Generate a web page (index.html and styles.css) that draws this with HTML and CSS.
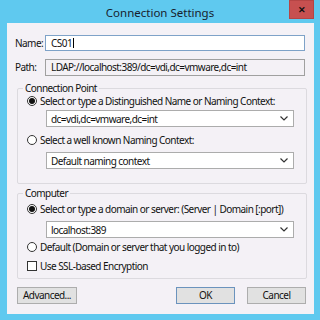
FILE: index.html
```html
<!DOCTYPE html>
<html lang="en">
<head>
    <meta charset="UTF-8">
    <title>Connection Settings</title>
    <link rel="stylesheet" href="styles.css">
</head>
<body>
    <div class="window">
        <div class="titlebar">
            <span></span>
            <div class="title">Connection Settings</div>
            <div class="close">&#x2715;</div>
        </div>
        <div class="client">
            <div class="field-row">
                <span class="label">Name:</span>
                <div class="textbox focused">CS01<span class="caret"></span></div>
            </div>
            <div class="field-row path">
                <span class="label">Path:</span>
                <div class="textbox readonly">LDAP://localhost:389/dc=vdi,dc=vmware,dc=int</div>
            </div>

            <div class="group group-point">
                <div class="group-title">Connection Point</div>
                <label class="option first">
                    <span class="radio checked"></span>
                    Select or type a Distinguished Name or Naming Context:
                </label>
                <div class="combo">
                    <span>dc=vdi,dc=vmware,dc=int</span>
                    <svg width="8" height="5" viewBox="0 0 8 5"><polyline points="0.5,0.5 4,4 7.5,0.5" fill="none" stroke="#333" stroke-width="1.2"/></svg>
                </div>
                <label class="option second">
                    <span class="radio"></span>
                    Select a well known Naming Context:
                </label>
                <div class="combo">
                    <span>Default naming context</span>
                    <svg width="8" height="5" viewBox="0 0 8 5"><polyline points="0.5,0.5 4,4 7.5,0.5" fill="none" stroke="#333" stroke-width="1.2"/></svg>
                </div>
            </div>

            <div class="group group-computer">
                <div class="group-title">Computer</div>
                <label class="option first">
                    <span class="radio checked"></span>
                    Select or type a domain or server: (Server | Domain [:port])
                </label>
                <div class="combo">
                    <span>localhost:389</span>
                    <svg width="8" height="5" viewBox="0 0 8 5"><polyline points="0.5,0.5 4,4 7.5,0.5" fill="none" stroke="#333" stroke-width="1.2"/></svg>
                </div>
                <label class="option default">
                    <span class="radio"></span>
                    Default (Domain or server that you logged in to)
                </label>
                <label class="option ssl">
                    <span class="checkbox"></span>
                    Use SSL-based Encryption
                </label>
            </div>

            <div class="buttons">
                <button>Advanced...</button>
                <span class="spacer"></span>
                <button class="default-btn">OK</button>
                <button>Cancel</button>
            </div>
        </div>
    </div>
</body>
</html>
```

FILE: styles.css
```css
body {
    margin: 0;
    background-color: #5fc9ef;
    font-family: "Noto Sans", sans-serif;
    font-size: 10px;
    letter-spacing: -0.55px;
    color: #111;
}

.window {
    width: 320px;
    height: 320px;
    display: flex;
    flex-direction: column;
}

.titlebar {
    height: 23px;
    display: grid;
    grid-template-columns: 1fr auto 1fr;
    align-items: start;
}

.title {
    font-size: 11.5px;
    letter-spacing: 0;
    color: #17212d;
    line-height: 16px;
    margin-top: 5px;
}

.close {
    justify-self: end;
    width: 25px;
    height: 19px;
    margin-right: 6px;
    background-color: #c75050;
    color: #111;
    font-size: 9px;
    font-weight: bold;
    letter-spacing: 0;
    line-height: 19px;
    text-align: center;
    box-shadow: inset 0 0 0 1px #b54545;
}

.client {
    margin: 0 6px 6px 7px;
    height: 291px;
    background-color: #f4f1f6;
    padding-top: 12px;
    box-sizing: border-box;
    display: flex;
    flex-direction: column;
}

.field-row {
    display: flex;
    align-items: center;
    height: 16px;
    padding-left: 8px;
}

.field-row.path {
    margin-top: 8px;
}

.label {
    width: 30px;
    flex-shrink: 0;
}

.textbox {
    width: 260px;
    height: 16px;
    box-sizing: border-box;
    border: 1px solid #a6a6a6;
    padding-left: 5px;
    line-height: 14px;
    display: flex;
    align-items: center;
    white-space: nowrap;
}

.textbox.focused {
    background-color: #fff;
    border-color: #7ea2c8;
}

.textbox.readonly {
    height: 17px;
    background-color: #f4f1f6;
    border-color: #a0a0a0;
}

.caret {
    display: inline-block;
    width: 1px;
    height: 10px;
    background-color: #000;
    margin-left: 1px;
}

.group {
    margin: 13px 7px 0 10px;
    border: 1px solid #dcdadf;
    border-radius: 2px;
    display: flex;
    flex-direction: column;
    padding-left: 9px;
}

.group-point {
    height: 96px;
    box-sizing: border-box;
}

.group-computer {
    margin-top: 9px;
    height: 86px;
    box-sizing: border-box;
}

.group-title {
    align-self: flex-start;
    margin: -8px 0 0 -4px;
    padding: 0 2px;
    height: 14px;
    line-height: 14px;
    background-color: #f4f1f6;
}

.option {
    display: flex;
    align-items: center;
    gap: 3px;
    height: 14px;
    white-space: nowrap;
}

.group .first {
    margin-top: -1px;
}

.group-computer .first {
    margin-top: 2px;
}

.option.second {
    margin-top: 6px;
}

.option.default {
    margin-top: 2px;
}

.option.ssl {
    margin-top: 5px;
}

.radio {
    flex-shrink: 0;
    width: 10px;
    height: 10px;
    box-sizing: border-box;
    border: 1px solid #333;
    border-radius: 50%;
    background-color: #fff;
    display: flex;
    align-items: center;
    justify-content: center;
}

.radio.checked::after {
    content: "";
    width: 6px;
    height: 6px;
    border-radius: 50%;
    background-color: #111;
}

.checkbox {
    flex-shrink: 0;
    width: 10px;
    height: 10px;
    box-sizing: border-box;
    border: 1px solid #333;
    background-color: #fff;
}

.combo {
    margin: 2px 0 0 19px;
    width: 248px;
    height: 17px;
    box-sizing: border-box;
    border: 1px solid #acacac;
    background-color: #fff;
    display: flex;
    align-items: center;
    justify-content: space-between;
    padding: 0 5px 0 4px;
    white-space: nowrap;
}

.option.second + .combo {
    margin-top: 5px;
}

.group-computer .combo {
    margin-top: 5px;
}

.buttons {
    display: flex;
    gap: 12px;
    margin: 8px 8px 0 10px;
}

.spacer {
    flex: 1;
}

button {
    width: 59px;
    height: 17px;
    padding: 0;
    font-family: inherit;
    font-size: 10px;
    letter-spacing: inherit;
    line-height: 15px;
    color: #111;
    background-color: #e1e1e1;
    border: 1px solid #adadad;
    border-radius: 0;
}

button:first-child {
    width: 60px;
}

.default-btn {
    border-color: #6b93bd;
}
```
